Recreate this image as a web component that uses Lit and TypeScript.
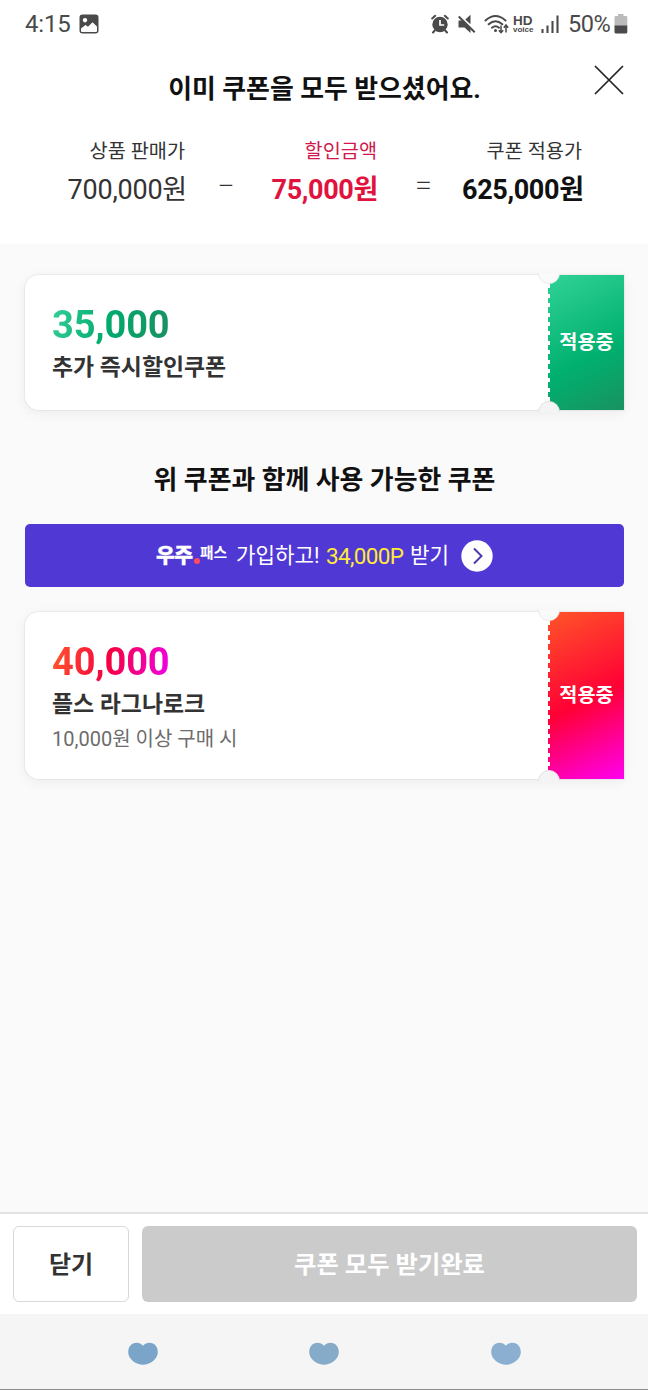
import { LitElement, html, css, svg } from "lit";
import { customElement, property } from "lit/decorators.js";

@customElement("status-bar")
class StatusBar extends LitElement {
  static styles = css`
    :host { display: flex; align-items: center; height: 48px; padding: 0 20px 0 25px; color: #4a4a4a; box-sizing: border-box; }
    .time { font-size: 24px; line-height: 28px; letter-spacing: -0.2px; width: 54px; }
    .spacer { flex: 1; }
    .icons { display: flex; align-items: center; }
    svg { display: block; }
    .mute { margin-left: 8px; }
    .wifi { margin-left: 7px; }
    .hd { display: flex; flex-direction: column; width: 22px; margin: 1px 6px 0 4px; }
    .hd-top { font: 700 13.500px/11px "Liberation Sans", sans-serif; }
    .hd-bottom { font: 700 8px/8px "Liberation Sans", sans-serif; }
    .percent { font-size: 23.5px; line-height: 28px; letter-spacing: -0.5px; margin-left: 9px; width: 46px; }
  `;
  render() {
    return html`
      <span class="time">4:15</span>
      <svg width="20" height="20" viewBox="0 0 20 20">
        <path fill="#4a4a4a" fill-rule="evenodd" d="M3.500 .500h13a3 3 0 0 1 3 3v13a3 3 0 0 1-3 3h-13a3 3 0 0 1-3-3v-13a3 3 0 0 1 3-3zM2 14.500V17q0 1 1 1h14q1 0 1-1v-4.500l-4.500-4.200-4.500 4.500-2.500-1.800zM6 4a2.200 2.200 0 1 0 .01 0z"/>
      </svg>
      <span class="spacer"></span>
      <div class="icons">
        <svg width="18" height="20" viewBox="0 0 18 20">
          <g fill="none" stroke="#4a4a4a" stroke-width="2" stroke-linecap="round">
            <path d="M1.200 4.500 4.200 1.800M16.800 4.500 13.800 1.800M3.800 16.500 2 18.500M14.200 16.500 16 18.500"/>
          </g>
          <circle cx="9" cy="10.500" r="7.700" fill="#4a4a4a"/>
          <path d="M9 6v5h4.200" fill="none" stroke="#fff" stroke-width="1.700"/>
        </svg>
        <svg class="mute" width="20" height="20" viewBox="0 0 20 20">
          <path fill="#4a4a4a" d="M1.500 6.500H6l7.500 7.500v5L7.500 13.500h-6zM8.300 5.500 13.500 .8v9.400z"/>
          <path d="M1.700 2.500 17.700 18.200" stroke="#4a4a4a" stroke-width="2"/>
        </svg>
        <svg class="wifi" width="25" height="20" viewBox="0 0 25 20">
          <g fill="none" stroke="#4a4a4a" stroke-width="2" stroke-linecap="round">
            <path d="M1.500 6.500Q11.500-2.500 21.500 6.500M4.700 10.300q6.800-6 13.600 0M8 13.700q3.500-3 7 0"/>
          </g>
          <circle cx="11.500" cy="16.500" r="1.500" fill="#4a4a4a"/>
          <path d="M17 11.500v7M14.800 16.300 17 18.700l2.200-2.400M22 18.500v-7M19.800 13.700 22 11l2.200 2.700" fill="none" stroke="#4a4a4a" stroke-width="1.500"/>
        </svg>
        <div class="hd"><span class="hd-top">HD</span><span class="hd-bottom">voice</span></div>
        <svg width="18" height="20" viewBox="0 0 18 20">
          <path d="M1.500 15v4M6.500 11.500V19M11.500 7v12M16.500 1.500V19" stroke="#4a4a4a" stroke-width="2.100" fill="none"/>
        </svg>
        <span class="percent">50%</span>
        <svg width="14" height="20" viewBox="0 0 14 20">
          <path fill="#bbb" d="M4 0h5.500v2H12q1.300 0 1.300 1.300V12H.5V3.300Q.5 2 1.800 2H4z"/>
          <path fill="#4a4a4a" d="M.5 11.500h12.800V18q0 1.500-1.500 1.500H2Q.5 19.500.5 18z"/>
        </svg>
      </div>
    `;
  }
}

@customElement("coupon-card")
class CouponCard extends LitElement {
  @property() amount = "";
  @property() name = "";
  @property() note = "";
  @property({ reflect: true }) tone = "green";

  static styles = css`
    :host {
      display: flex; position: relative; box-sizing: border-box; height: 135px; margin: 0 24px 0 25px;
      background: #fff; border-radius: 14px 0 0 14px;
      box-shadow: 0 0 1px 1px rgba(0, 0, 0, 0.05), 0 3px 14px rgba(0, 0, 0, 0.06);
      --grad-text: linear-gradient(105deg, #34cf97 0%, #00a96c 50%, #1c8f60 100%);
      --grad-stub: linear-gradient(153deg, #31d296 0%, #00b06f 60%, #199260 100%);
    }
    :host([tone="red"]) {
      height: 167px;
      --grad-text: linear-gradient(100deg, #ff5a2b 0%, #f5003d 48%, #f000e8 100%);
      --grad-stub: linear-gradient(155deg, #ff5528 0%, #ff0035 53%, #ff00f0 100%);
    }
    .body { flex: 1; padding: 29px 0 0 27px; }
    .amount {
      display: block; width: max-content; font-size: 38px; line-height: 42px; font-weight: 700; letter-spacing: -0.15px;
      background: var(--grad-text); -webkit-background-clip: text; background-clip: text; color: transparent;
    }
    .name { height: 36px; margin-top: 4px; font-size: 22.900px; line-height: 36px; font-weight: 700; color: #333; }
    .note { height: 32px; font-size: 20px; line-height: 33px; color: #6c6c6c; }
    .stub {
      box-sizing: border-box; width: 76px; padding: 1px 0 0 1px; display: flex; align-items: center; justify-content: center;
      background: repeating-linear-gradient(180deg, #fff 0 4px, transparent 4px 9.400px) 0 0 / 2px 100% no-repeat, var(--grad-stub);
      color: #fff; font-size: 19.700px; line-height: 28px; font-weight: 700;
    }
    .notch { position: absolute; left: 513px; width: 22px; height: 11px; overflow: hidden; }
    .notch.top { top: -2px; }
    .notch.bottom { bottom: -2px; }
    .notch::before {
      content: ""; position: absolute; left: 0; width: 22px; height: 22px; box-sizing: border-box;
      border-radius: 50%; background: #fafafa; border: 1px solid #ececec;
    }
    .notch.top::before { bottom: 0; }
    .notch.bottom::before { top: 0; background: #f4f4f4; border-color: #e2e2e2; }
  `;
  render() {
    return html`
      <div class="body">
        <span class="amount">${this.amount}</span>
        <div class="name">${this.name}</div>
        ${this.note ? html`<div class="note">${this.note}</div>` : null}
      </div>
      <div class="stub">적용중</div>
      <i class="notch top"></i><i class="notch bottom"></i>
    `;
  }
}

@customElement("app-root")
class AppRoot extends LitElement {
  static styles = css`
    :host {
      display: flex; flex-direction: column; width: 648px; height: 1390px; overflow: hidden;
      background: #fafafa; color: #111; font-family: Roboto, "Noto Sans CJK KR", sans-serif;
    }
    .header { height: 244px; background: #fff; }
    .title-row { display: flex; height: 80px; padding-left: 63px; }
    .title { flex: 1; text-align: center; font-size: 25.900px; line-height: 40px; padding-top: 21px; font-weight: 700; }
    .close { width: 62px; padding: 17px 0 0 8px; box-sizing: border-box; }
    .prices { display: flex; height: 80px; padding-top: 8px; }
    .cell { display: flex; flex-direction: column; text-align: right; color: #333; white-space: nowrap; }
    .cell.list { width: 187px; }
    .cell.off { width: 113px; color: #cf1a4b; }
    .cell.final { width: 120px; }
    .label { height: 31px; font-size: 19.700px; line-height: 31px; padding-right: 1px; }
    .list .label { padding-right: 2px; }
    .final .label { padding-right: 0; }
    .value { height: 46px; font-size: 27px; line-height: 46px; letter-spacing: -0.22px; }
    .strong { font-weight: 700; letter-spacing: -0.35px; }
    .final .strong { color: #111; }
    .off .strong { color: #e0133f; }
    .op { width: 78px; text-align: center; color: #333; font: 300 27px/40px "Noto Sans CJK KR", sans-serif; padding-top: 28px; box-sizing: border-box; }
    .op.eq { width: 84px; padding-left: 7px; }
    .content { flex: 1; padding-top: 31px; }
    .subtitle { height: 40px; margin: 50px 0 24px; padding-left: 1px; text-align: center; font-size: 25.900px; line-height: 40px; font-weight: 700; }
    .banner {
      display: flex; align-items: center; height: 63px; margin: 0 24px 25px 25px; box-sizing: border-box; padding-left: 131px;
      border-radius: 5px; background: #5038d4; color: #fff; font-size: 21.200px; line-height: 30px; white-space: nowrap;
    }
    .logo { font-size: 20.500px; font-weight: 900; letter-spacing: -0.6px; width: 38px; -webkit-text-stroke: 0.3px #fff; }
    .dot { width: 6px; height: 6px; border-radius: 50%; background: #ff4a64; margin-top: 11px; }
    .pass { font-size: 14.800px; font-weight: 700; line-height: 20px; width: 36px; margin-top: -5px; }
    .join { width: 90px; }
    .point { color: #ffea3a; width: 84px; font-size: 22.500px; letter-spacing: -0.65px; }
    .get { width: 51px; }
    .banner svg { display: block; }
    .actions { display: flex; gap: 13px; height: 102px; box-sizing: border-box; padding: 12px 11px 12px 13px; background: #fff; border-top: 2px solid #e2e2e2; }
    .btn { box-sizing: border-box; height: 76px; padding-top: 2px; border-radius: 6px; display: flex; align-items: center; justify-content: center; font-size: 24px; line-height: 34px; font-weight: 700; }
    .btn.ghost { width: 116px; border: 1px solid #d8d8d8; color: #333; }
    .btn.done { flex: 1; background: #cbcbcb; color: #fff; font-size: 24.300px; }
    .nav { display: flex; height: 76px; box-sizing: border-box; border-bottom: 1px solid #8c8c8c; background: #f5f5f5; padding: 28px 0 0 127px; gap: 149.250px; }
  `;

  heart(fill: string) {
    return html`<svg width="32" height="24" viewBox="0 0 32 24">${svg`<path fill=${fill} d="M16 3.800C14.300 1.700 12 .7 9.500 .7 4.500 .7 1.200 4.700 1.200 10 1.200 17.500 9.500 22.800 16 22.800S30.800 17.500 30.800 10C30.800 4.700 27.500 .7 22.500 .7 20 .7 17.700 1.700 16 3.800z"/>`}</svg>`;
  }

  render() {
    return html`
      <div class="header">
        <status-bar></status-bar>
        <div class="title-row">
          <div class="title">이미 쿠폰을 모두 받으셨어요.</div>
          <div class="close">
            <svg width="30" height="30" viewBox="0 0 30 30"><path d="M1 1 29 29M29 1 1 29" stroke="#222" stroke-width="1.700"/></svg>
          </div>
        </div>
        <div class="prices">
          <div class="cell list"><span class="label">상품 판매가</span><span class="value">700,000원</span></div>
          <div class="op">−</div>
          <div class="cell off"><span class="label">할인금액</span><span class="value strong">75,000원</span></div>
          <div class="op eq">=</div>
          <div class="cell final"><span class="label">쿠폰 적용가</span><span class="value strong">625,000원</span></div>
        </div>
      </div>
      <div class="content">
        <coupon-card amount="35,000" name="추가 즉시할인쿠폰" tone="green"></coupon-card>
        <div class="subtitle">위 쿠폰과 함께 사용 가능한 쿠폰</div>
        <div class="banner">
          <span class="logo">우주</span><i class="dot"></i><span class="pass">패스</span>
          <span class="join">가입하고!</span><span class="point">34,000P</span><span class="get">받기</span>
          <svg width="32" height="32" viewBox="0 0 32 32"><circle cx="16" cy="16" r="15.700" fill="#fff"/><path d="M13 8.500 20.500 16 13 23.500" fill="none" stroke="#5038b0" stroke-width="2"/></svg>
        </div>
        <coupon-card amount="40,000" name="플스 라그나로크" note="10,000원 이상 구매 시" tone="red"></coupon-card>
      </div>
      <div class="actions">
        <div class="btn ghost">닫기</div>
        <div class="btn done">쿠폰 모두 받기완료</div>
      </div>
      <div class="nav">${this.heart("#7aa5c9")}${this.heart("#86abc9")}${this.heart("#8aafd0")}</div>
    `;
  }
}
